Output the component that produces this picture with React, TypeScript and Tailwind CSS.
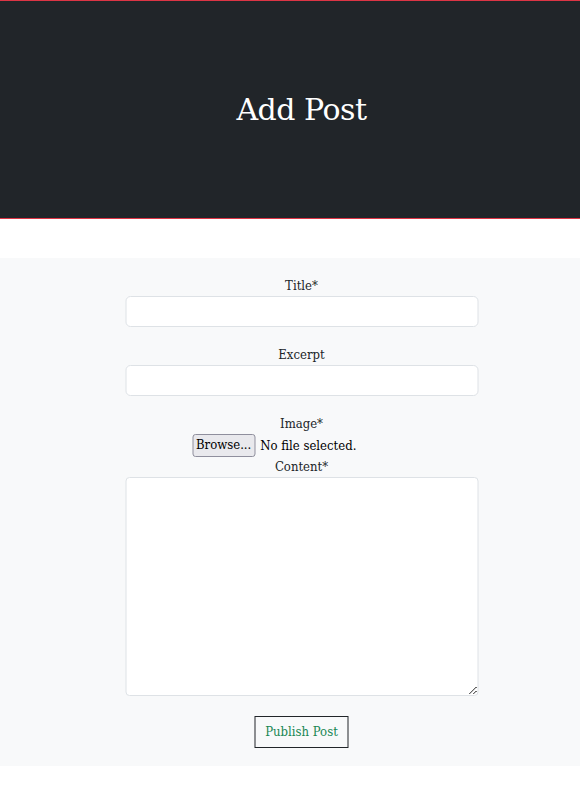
export default function App() {
  return (
    <div className="min-h-[801px] bg-white text-[#212529] font-['DejaVu_Serif',serif]">
      <PageHeader title="Add Post" />
      <div className="h-[39px]" />
      <PostForm />
    </div>
  )
}

function PageHeader({ title }: { title: string }) {
  return (
    <header className="h-[219px] bg-[#212529] border-t border-b border-[#dc3545] flex items-center justify-center pl-[23px]">
      <h1 className="text-[30px] text-white tracking-[-0.5px]">{title}</h1>
    </header>
  )
}

function PostForm() {
  return (
    <section className="bg-[#f8f9fa] pt-[18px] pb-[18px]">
      <form className="w-[353px] mx-auto translate-x-[11.5px] flex flex-col items-center text-[13px] font-['DejaVu_Serif_Condensed','DejaVu_Serif',serif]">
        <Field label="Title" required />
        <div className="h-[18px]" />
        <Field label="Excerpt" />
        <div className="h-[18px]" />
        <label className="leading-[20px]">Image*</label>
        {/* file input box is wider than its contents, which sit at the left */}
        <div className="w-[219px] flex items-center gap-[5px] h-[23px]">
          <span className="px-[3px] h-[23px] leading-[20px] border border-[#8f8f9d] bg-[#e9e9ed] rounded-[3px] text-black">
            Browse...
          </span>
          <span className="text-black">No file selected.</span>
        </div>
        <label className="leading-[20px]">Content*</label>
        <textarea className="w-full h-[219px] bg-white border border-[#dee2e6] rounded-[4px] block" />
        <button
          type="button"
          className="mt-[20px] h-[32px] px-[10px] border border-[#212529] text-[#198754] bg-transparent"
        >
          Publish Post
        </button>
      </form>
    </section>
  )
}

function Field({ label, required }: { label: string; required?: boolean }) {
  return (
    <>
      <label className="leading-[20px]">
        {label}
        {required ? '*' : ''}
      </label>
      <input className="w-full h-[31px] bg-white border border-[#dee2e6] rounded-[5px]" />
    </>
  )
}
